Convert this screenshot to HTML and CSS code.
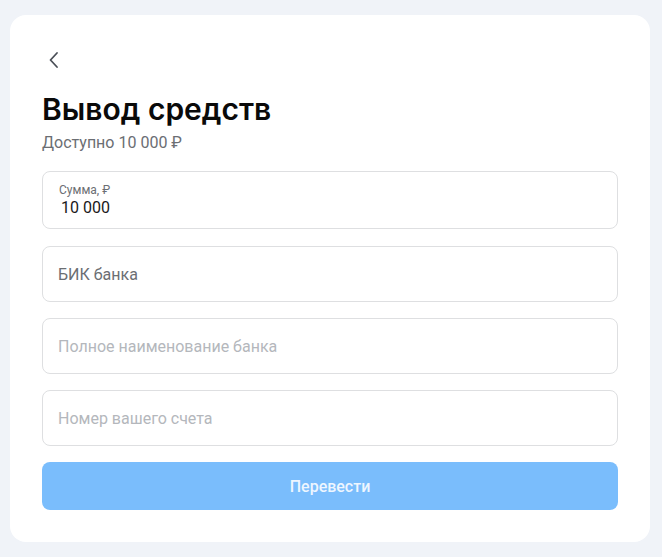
FILE: index.html
```html
<!DOCTYPE html>
<html lang="ru">
<head>
<meta charset="utf-8">
<link rel="stylesheet" href="styles.css">
</head>
<body>
<div class="card">
  <button class="back" aria-label="Назад">
    <svg width="24" height="24" viewBox="0 0 24 24"><path d="M15 5 L8.5 12 L15 19" fill="none" stroke="#4a4f57" stroke-width="1.8" stroke-linecap="round" stroke-linejoin="round"/></svg>
  </button>
  <h1 class="title">Вывод средств</h1>
  <div class="avail">Доступно 10 000 ₽</div>
  <div class="form">
    <div class="field field-filled">
      <div class="label">Сумма, ₽</div>
      <div class="value">10 000</div>
    </div>
    <div class="field"><span class="text">БИК банка</span></div>
    <div class="field"><span class="placeholder">Полное наименование банка</span></div>
    <div class="field"><span class="placeholder">Номер вашего счета</span></div>
    <button class="submit">Перевести</button>
  </div>
</div>
</body>
</html>
```
FILE: styles.css
```css
* { box-sizing: border-box; }
html, body { margin: 0; padding: 0; }
body {
  background: #f0f3f8;
  font-family: Roboto, "Liberation Sans", sans-serif;
  padding: 15px 12px 15px 10px;
}
.card {
  width: 640px;
  background: #ffffff;
  border-radius: 16px;
  padding: 33px 32px 32px 32px;
}
.back {
  display: block;
  border: 0;
  background: none;
  padding: 0;
  margin: 0;
  width: 24px;
  height: 24px;
  cursor: pointer;
}
.title {
  margin: 19px 0 0 0;
  font-family: Inter, Roboto, "Liberation Sans", sans-serif;
  font-size: 30px;
  line-height: 36px;
  font-weight: 600;
  color: #0a0a0a;
  letter-spacing: 0;
}
.avail {
  margin-top: 6px;
  font-size: 16px;
  line-height: 20px;
  color: #6b6e73;
}
.form {
  margin-top: 18px;
  display: flex;
  flex-direction: column;
  gap: 16px;
}
.field {
  height: 56px;
  border: 1px solid #dedfe1;
  border-radius: 8px;
  padding: 0 15px;
  display: flex;
  align-items: center;
  font-size: 16px;
}
.field-filled {
  height: 58px;
  flex-direction: column;
  align-items: flex-start;
  justify-content: center;
  padding-left: 16px;
  margin-bottom: 1px;
}
.label {
  font-size: 12px;
  line-height: 14px;
  color: #6b6e73;
}
.value {
  font-size: 16px;
  line-height: 20px;
  color: #1a1a1a;
  padding-left: 2px;
  margin-top: 1px;
}
.text { color: #6b6e73; }
.placeholder { color: #b4b7bc; }
.submit {
  height: 48px;
  border: 0;
  border-radius: 8px;
  background: #7abdfc;
  color: #eef6ff;
  font-family: Roboto, "Liberation Sans", sans-serif;
  font-size: 16px;
  font-weight: 500;
  cursor: pointer;
}
```
